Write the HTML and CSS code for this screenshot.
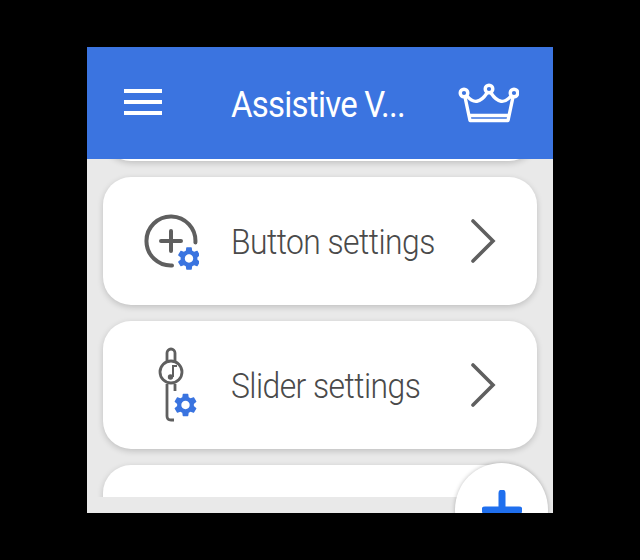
FILE: index.html
```html
<!DOCTYPE html>
<html lang="en">
<head>
<meta charset="utf-8">
<title>Assistive Volume</title>
<link rel="stylesheet" href="styles.css">
</head>
<body>
<svg class="defs" width="0" height="0" aria-hidden="true">
  <symbol id="gear" viewBox="0 0 24 24">
    <path fill="#3a74e0" d="M19.14 12.94c.04-.3.06-.61.06-.94 0-.32-.02-.64-.07-.94l2.03-1.58c.18-.14.23-.41.12-.61l-1.92-3.32c-.12-.22-.37-.29-.59-.22l-2.39.96c-.5-.38-1.03-.7-1.62-.94l-.36-2.54c-.04-.24-.24-.41-.48-.41h-3.84c-.24 0-.43.17-.47.41l-.36 2.54c-.59.24-1.13.57-1.62.94l-2.39-.96c-.22-.08-.47 0-.59.22L2.74 8.87c-.12.21-.08.47.12.61l2.03 1.58c-.05.3-.09.63-.09.94s.02.64.07.94l-2.03 1.58c-.18.14-.23.41-.12.61l1.92 3.32c.12.22.37.29.59.22l2.39-.96c.5.38 1.03.7 1.62.94l.36 2.54c.05.24.24.41.48.41h3.84c.24 0 .44-.17.47-.41l.36-2.54c.59-.24 1.13-.56 1.62-.94l2.39.96c.22.08.47 0 .59-.22l1.92-3.32c.12-.22.07-.47-.12-.61l-2.01-1.58zM12 15.6c-1.98 0-3.6-1.62-3.6-3.6s1.62-3.6 3.6-3.6 3.6 1.62 3.6 3.6-1.62 3.6-3.6 3.6z"/>
  </symbol>
</svg>
<main class="screen">
  <header class="appbar">
    <svg class="menu" width="38" height="26" viewBox="0 0 38 26"><path d="M0 2h38M0 13h38M0 24h38" stroke="#fff" stroke-width="4" fill="none"/></svg>
    <h1 class="title">Assistive V...</h1>
    <svg class="crown" width="62" height="42" viewBox="0 0 62 42" fill="none" stroke="#fff" stroke-width="3.400" stroke-linejoin="round">
      <circle cx="7" cy="12" r="3.800"/><circle cx="32" cy="8" r="3.800"/><circle cx="57" cy="12" r="3.800"/>
      <path d="M10 15Q20 27 30 12M34 12Q44 27 54 15M8 16 13 39.500H51L56 16M13 34.500H51"/>
    </svg>
  </header>
  <div class="viewport">
    <div class="list">
      <section class="card"></section>
      <section class="card">
        <span class="icon">
          <svg width="60" height="60" viewBox="0 0 60 60" fill="none" stroke="#5f5f5f" stroke-width="4" stroke-linecap="round">
            <path d="M33 54.500A24.500 24.500 0 1 1 56.400 31.500"/>
            <path d="M32 20v20M22 30h20"/>
            <use href="#gear" x="36" y="33.500" width="28" height="28" stroke="none"/>
          </svg>
        </span>
        <span class="label">Button settings</span>
        <svg class="chevron" width="26" height="46" viewBox="0 0 26 46"><path d="M2 3 22 23 2 43" stroke="#5f5f5f" stroke-width="3.600" fill="none" stroke-linecap="round"/></svg>
      </section>
      <section class="card">
        <span class="icon">
          <svg width="60" height="76" viewBox="0 0 60 76" fill="none" stroke="#5f5f5f" stroke-width="2.800">
            <path d="M28 14V6a4 4 0 0 1 8 0v8M28 37V69q0 4 4 4h3M36 37v7"/>
            <circle cx="32" cy="25" r="11"/>
            <path d="M34 30V19H38" stroke-width="2"/>
            <circle cx="31.500" cy="30" r="2.700" fill="#5f5f5f" stroke="none"/>
            <use href="#gear" x="32.500" y="44" width="28" height="28" stroke="none"/>
          </svg>
        </span>
        <span class="label">Slider settings</span>
        <svg class="chevron" width="26" height="46" viewBox="0 0 26 46"><path d="M2 3 22 23 2 43" stroke="#5f5f5f" stroke-width="3.600" fill="none" stroke-linecap="round"/></svg>
      </section>
      <section class="card"></section>
    </div>
  </div>
  <button class="fab" aria-label="Add">
    <svg width="40" height="40" viewBox="0 0 40 40"><path d="M20 3v34M3 20h34" stroke="#1f6fee" stroke-width="7" stroke-linecap="round"/></svg>
  </button>
</main>
</body>
</html>
```
FILE: styles.css
```css
* { box-sizing: border-box; }
html, body { margin: 0; height: 100%; background: #000; }
body { padding-top: 47px; font-family: "Roboto", "Liberation Sans", sans-serif; overflow: hidden; }
.defs { position: absolute; }
.screen {
  position: relative;
  width: 466px;
  height: 466px;
  margin: 0 auto;
  background: #e9e9e9;
  overflow: hidden;
  display: flex;
  flex-direction: column;
}
.appbar {
  position: relative;
  z-index: 2;
  flex: none;
  height: 112px;
  padding: 0 34px 0 37px;
  background: #3b74e0;
  display: flex;
  align-items: center;
}
.menu { flex: none; margin-top: -2px; }
.title {
  flex: 1;
  margin: 4px 0 0 69px;
  color: #fff;
  font-size: 36px;
  font-weight: 400;
  letter-spacing: -0.8px;
  white-space: nowrap;
  transform-origin: left center;
  transform: scaleX(0.915);
}
.crown { flex: none; margin-top: -2px; }
.viewport { height: 338px; flex: none; overflow: hidden; padding: 0 16px; }
.list {
  margin-top: -126px;
  display: flex;
  flex-direction: column;
  gap: 16px;
}
.card {
  flex: none;
  height: 128px;
  background: #fff;
  border-radius: 28px;
  box-shadow: 0 2px 6px rgba(0, 0, 0, .18);
  display: flex;
  align-items: center;
  padding: 0 40px 0 36px;
}
.icon { flex: none; width: 92px; display: flex; align-items: center; }
.label {
  flex: 1;
  margin-top: 2px;
  color: #4a4a4a;
  font-size: 35px;
  font-weight: 300;
  white-space: nowrap;
  letter-spacing: -0.6px;
  transform-origin: left center;
  transform: scaleX(0.91);
}
.chevron { flex: none; }
.fab {
  position: absolute;
  left: 368px;
  top: 416px;
  width: 93px;
  height: 93px;
  padding: 0;
  border: 0;
  border-radius: 50%;
  background: #fff;
  box-shadow: 0 0 4px rgba(0, 0, 0, .25);
  display: flex;
  align-items: center;
  justify-content: center;
}
```
